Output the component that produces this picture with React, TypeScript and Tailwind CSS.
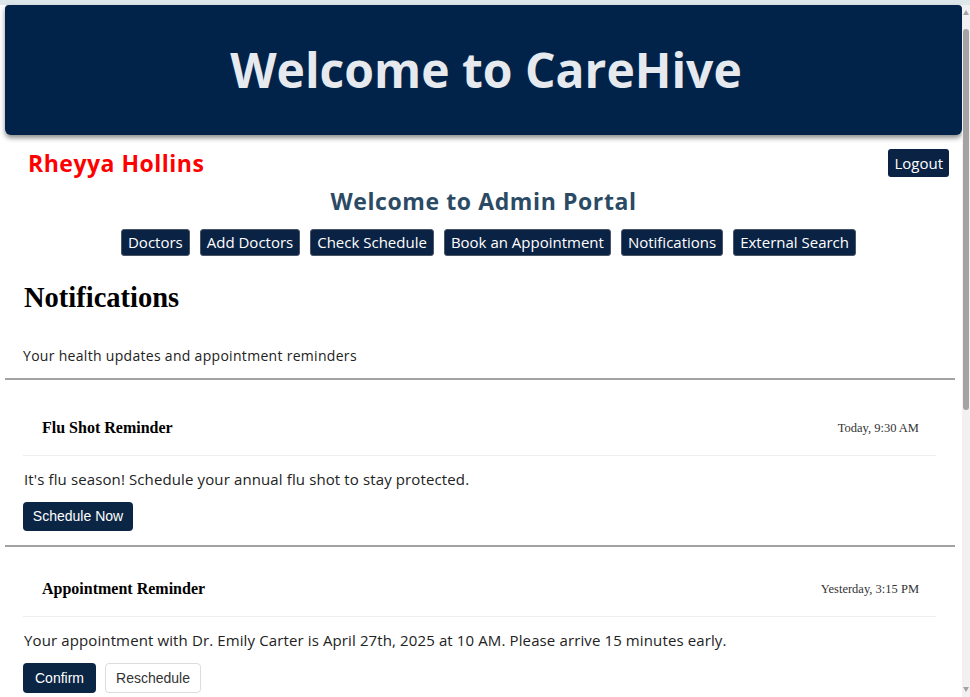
const sans = "font-['Open_Sans',sans-serif]";

const navItems = [
  "Doctors",
  "Add Doctors",
  "Check Schedule",
  "Book an Appointment",
  "Notifications",
  "External Search",
];

function Scrollbar() {
  return (
    <div className="flex w-[8px] flex-col items-center bg-[#f1f1f1]">
      <div className="mt-[5px] h-0 w-0 border-x-[3px] border-b-[5px] border-x-transparent border-b-[#a3a3a3]" />
      <div className="mt-[14px] h-[381px] w-[6px] rounded-[3px] bg-[#a3a3a3]" />
      <div className="mt-auto mb-[5px] h-0 w-0 border-x-[3px] border-t-[5px] border-x-transparent border-t-[#a3a3a3]" />
    </div>
  );
}

function Notice({
  title,
  time,
  body,
  top,
  children,
}: {
  title: string;
  time: string;
  body: string;
  top: string;
  children: React.ReactNode;
}) {
  return (
    <div>
      <div className={`flex items-center justify-between pl-[42px] pr-[43px] ${top}`}>
        <span className="font-['Liberation_Serif',serif] text-[16px] font-bold leading-[20px] text-black">
          {title}
        </span>
        <span className="font-['Liberation_Serif',serif] text-[12.5px] leading-[16px] text-[#333]">
          {time}
        </span>
      </div>
      <div className="ml-[23px] mr-[26px] mt-[17px] h-px bg-[#eeeeee]" />
      <p className={`ml-[24px] mt-[12px] text-[15px] leading-[22px] tracking-[0.12px] text-[#222] ${sans}`}>
        {body}
      </p>
      <div className="ml-[23px] mt-[12px] flex gap-[9px]">{children}</div>
    </div>
  );
}

export default function App() {
  return (
    <div className="flex h-[697px] w-[970px] flex-col overflow-hidden bg-white">
      <div className="h-[5px] shrink-0 bg-[#dde6e9]" />
      <div className="flex flex-1">
        <div className="w-[962px]">
          <header className="ml-[5px] flex h-[130px] items-center justify-center rounded-b-[6px] rounded-t-[4px] bg-[#012349] shadow-[0_3px_5px_rgba(0,0,0,0.45)]">
            <h1 className={`pl-[5px] text-[48px] font-bold text-[#e6eaee] ${sans}`}>
              Welcome to CareHive
            </h1>
          </header>

          <div className={`mt-[14px] flex h-[28px] items-center justify-between pl-[28px] pr-[13px] ${sans}`}>
            <span className="text-[23px] font-bold tracking-[0.5px] text-[#ff0000]">Rheyya Hollins</span>
            <button className="h-[28px] rounded-[3px] bg-[#0a2244] px-[6px] text-[15px] text-white">
              Logout
            </button>
          </div>

          <h2 className={`mt-[10px] h-[28px] pl-[5px] text-center text-[23px] font-bold leading-[28px] tracking-[0.6px] text-[#2b4a64] ${sans}`}>
            Welcome to Admin Portal
          </h2>

          <nav className={`mt-[14px] flex justify-center gap-[10px] pl-[15px] ${sans}`}>
            {navItems.map((item) => (
              <button
                key={item}
                className="h-[27px] rounded-[3px] border border-[#4a5566] bg-[#0a2244] px-[6px] text-[15px] leading-[25px] text-white"
              >
                {item}
              </button>
            ))}
          </nav>

          <h1 className="ml-[24px] mt-[26px] font-['Liberation_Serif',serif] text-[28.5px] font-bold leading-[32px] text-black">
            Notifications
          </h1>
          <p className={`ml-[23px] mt-[32px] text-[14px] leading-[20px] tracking-[0.3px] text-[#222] ${sans}`}>
            Your health updates and appointment reminders
          </p>
          <div className="ml-[5px] mt-[12px] h-[2px] w-[950px] bg-[#a2a2a2]" />

          <Notice
            title="Flu Shot Reminder"
            time="Today, 9:30 AM"
            body="It's flu season! Schedule your annual flu shot to stay protected."
            top="mt-[38px]"
          >
            <button className="h-[29px] w-[110px] rounded-[4px] bg-[#0b2545] font-['Liberation_Sans',sans-serif] text-[14px] text-white">
              Schedule Now
            </button>
          </Notice>

          <div className="ml-[5px] mt-[14px] h-[2px] w-[950px] bg-[#a2a2a2]" />

          <Notice
            title="Appointment Reminder"
            time="Yesterday, 3:15 PM"
            body="Your appointment with Dr. Emily Carter is April 27th, 2025 at 10 AM. Please arrive 15 minutes early."
            top="mt-[32px]"
          >
            <button className="h-[30px] w-[73px] rounded-[4px] bg-[#0b2545] font-['Liberation_Sans',sans-serif] text-[14px] text-white">
              Confirm
            </button>
            <button className="h-[30px] w-[96px] rounded-[4px] border border-[#dddddd] bg-white font-['Liberation_Sans',sans-serif] text-[14px] text-[#333]">
              Reschedule
            </button>
          </Notice>
        </div>
        <Scrollbar />
      </div>
    </div>
  );
}
